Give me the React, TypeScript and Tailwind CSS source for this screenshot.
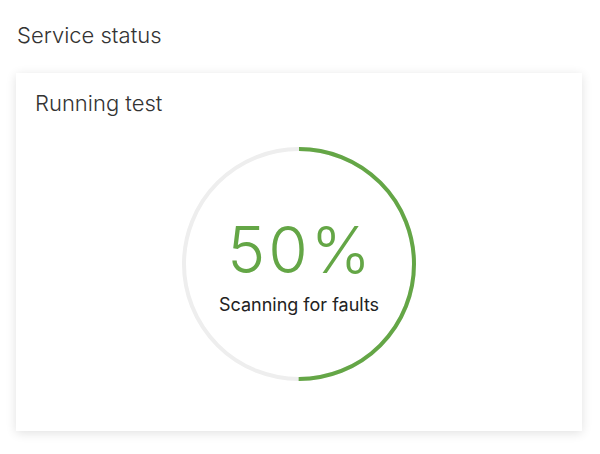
export default function App() {
  const pct = 50
  const r = 115
  const c = 2 * Math.PI * r

  return (
    <div className="w-[600px] h-[454px] bg-white font-['Inter','Noto_Sans',sans-serif] text-[#333]">
      <div className="px-[17px] pt-[21px]">
        <h1 className="text-[22px] font-light leading-[28px] text-[#333]">Service status</h1>
      </div>

      <div className="mx-4 mt-[24px] w-[566px] h-[358px] bg-white shadow-[0_2px_10px_rgba(0,0,0,0.12)] px-[19px] pt-[16px]">
        <h2 className="text-[22px] font-light leading-[28px] text-[#333]">Running test</h2>

        {/* progress ring */}
        <div className="relative mx-auto mt-[29px] w-[236px] h-[236px]">
          <svg width="236" height="236" viewBox="0 0 236 236" className="absolute inset-0">
            <circle cx="118" cy="118" r={r} fill="none" stroke="#eeeeee" strokeWidth="4" />
            <circle
              cx="118"
              cy="118"
              r={r}
              fill="none"
              stroke="#64a646"
              strokeWidth="4"
              strokeDasharray={`${(c * pct) / 100} ${c}`}
              transform="rotate(-90 118 118)"
            />
          </svg>
          <div className="absolute inset-0 flex flex-col items-center pt-[72px]">
            <div className="text-[64px] font-light leading-[64px] text-[#64a646] tracking-[3px] pl-[3px]">{pct}%</div>
            <div className="mt-[11px] text-[18px] leading-[24px] text-[#222]">Scanning for faults</div>
          </div>
        </div>
      </div>
    </div>
  )
}
